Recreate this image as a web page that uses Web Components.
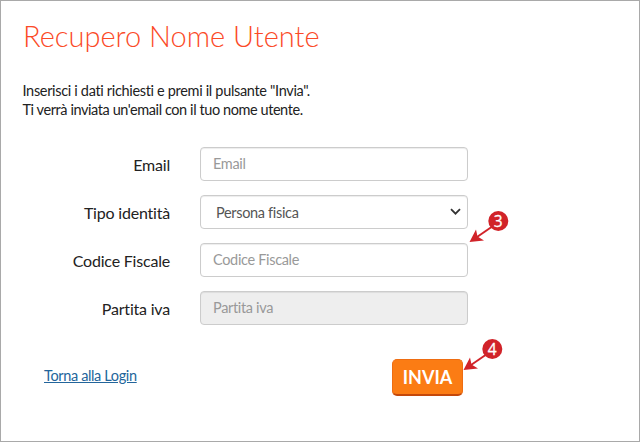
<!DOCTYPE html>
<html lang="it">
<head>
<meta charset="utf-8">
<title>Recupero Nome Utente</title>
<style>
    body {
        margin: 0;
        font-family: Lato, "Open Sans", sans-serif;
        color: #333;
    }

    intro-text span + span { letter-spacing: -.42px; }
</style>
</head>
<body>

<recovery-page>
    <page-title>Recupero Nome Utente</page-title>
    <intro-text>
        <span>Inserisci i dati richiesti e premi il pulsante "Invia".</span>
        <span>Ti verrà inviata un'email con il tuo nome utente.</span>
    </intro-text>
    <form-field label="Email" placeholder="Email"></form-field>
    <form-field label="Tipo identità" type="select">Persona fisica</form-field>
    <form-field label="Codice Fiscale" placeholder="Codice Fiscale">
        <step-marker slot="marker" step="3"></step-marker>
    </form-field>
    <form-field label="Partita iva" placeholder="Partita iva" disabled></form-field>
    <login-link slot="actions">Torna alla Login</login-link>
    <submit-button slot="actions">INVIA<step-marker slot="marker" step="4"></step-marker></submit-button>
</recovery-page>

<template id="recoveryPage">
    <style>
        :host {
            display: flex;
            flex-direction: column;
            box-sizing: border-box;
            width: 640px;
            height: 442px;
            padding: 16px 0 0 22px;
            border: 1px solid #a9a9a9;
            background: #fff;
            overflow: hidden;
        }

        .fields {
            display: flex;
            flex-direction: column;
        }

        .actions {
            display: flex;
            justify-content: space-between;
            align-items: flex-start;
            width: 419px;
            margin: 20px 0 0 21px;
        }
    </style>
    <div class="fields"><slot></slot></div>
    <div class="actions"><slot name="actions"></slot></div>
</template>

<template id="pageTitle">
    <style>
        :host { display: block; }

        h1 {
            margin: 0;
            width: max-content;
            font-size: 29px;
            font-weight: 300;
            line-height: 38px;
            color: #fb4a27;
        }
    </style>
    <h1><slot></slot></h1>
</template>

<template id="introText">
    <style>
        :host {
            display: flex;
            flex-direction: column;
            margin: 26px 0 28px -.5px;
            font-size: 14.5px;
            line-height: 19px;
            letter-spacing: -.33px;
            color: #222;
        }
    </style>
    <slot></slot>
</template>

<template id="formField">
    <style>
        :host {
            display: grid;
            grid-template-columns: 147px 268px;
            column-gap: 30px;
            align-items: center;
            height: 34px;
            margin-bottom: 14px;
        }

        label {
            padding-top: 1px;
            text-align: right;
            font-size: 16px;
            letter-spacing: -.2px;
            color: #222;
        }

        .box {
            display: flex;
            position: relative;
            box-sizing: border-box;
            height: 34px;
        }

        input, .select {
            box-sizing: border-box;
            width: 100%;
            height: 34px;
            padding: 0 12px 1px;
            border: 1px solid #ccc;
            border-radius: 4px;
            background: #fff;
            box-shadow: inset 0 1px 1px rgba(0, 0, 0, .075);
            font: 14.5px Lato, sans-serif;
            letter-spacing: -.33px;
            color: #555;
        }

        input::placeholder { color: #999; opacity: 1; }

        input:disabled { background: #eee; }

        .select {
            display: flex;
            align-items: center;
            justify-content: space-between;
            padding: 0 6px 0 15px;
        }
    </style>
    <label></label>
    <div class="box"></div>
</template>

<template id="loginLink">
    <style>
        :host { display: block; padding-top: 6px; }

        a {
            font-size: 14.5px;
            line-height: 19px;
            letter-spacing: -.36px;
            color: #23659b;
            text-decoration: underline;
        }
    </style>
    <a href="#"><slot></slot></a>
</template>

<template id="submitButton">
    <style>
        :host { display: block; position: relative; }

        button {
            display: block;
            box-sizing: border-box;
            width: 71px;
            height: 37px;
            padding: 0 0 1px;
            border: 1px solid #ee6d12;
            border-bottom: 2px solid #c4480a;
            border-radius: 5px;
            background: #fb7c14;
            font: bold 18px Lato, sans-serif;
            color: #fff;
        }
    </style>
    <button type="button"><slot></slot></button>
    <slot name="marker"></slot>
</template>

<template id="stepMarker">
    <style>
        /* il marcatore sta sopra il modulo, la punta tocca il controllo */
        :host {
            display: block;
            position: absolute;
            left: 100%;
            top: 0;
            width: 42px;
            height: 36px;
            pointer-events: none;
        }

        :host([step="3"]) { margin: -33px 0 0 1px; }
        :host([step="4"]) { margin: -21px 0 0 0; }

        svg { display: block; overflow: visible; }

        text {
            font: 15.5px "Open Sans", sans-serif;
            letter-spacing: 0;
            fill: #fff;
            stroke: #fff;
            stroke-width: .3;
            text-anchor: middle;
        }
    </style>
    <svg width="42" height="36" viewBox="0 0 42 36">
        <path d="M24 16 8 27" stroke="#d12329" stroke-width="2"/>
        <path d="M.5 32 7 19.5 8.5 26.5 15 30.5Z" fill="#d12329"/>
        <circle cx="29.3" cy="11" r="10" fill="#d12329"/>
        <text x="29.3" y="16.5"></text>
    </svg>
</template>

<script>
    (function recoveryComponents(customElements) {

        'use strict';

        class BaseComponent extends HTMLElement {

            constructor(templateId) {
                super();
                const template = document.querySelector(templateId);
                this.attachShadow({ mode: 'open' });
                this.shadowRoot.appendChild(document.importNode(template.content, true));
            }

        }

        class RecoveryPage extends BaseComponent {
            constructor() { super('#recoveryPage'); }
        }

        class PageTitle extends BaseComponent {
            constructor() { super('#pageTitle'); }
        }

        class IntroText extends BaseComponent {
            constructor() { super('#introText'); }
        }

        class LoginLink extends BaseComponent {
            constructor() { super('#loginLink'); }
        }

        class SubmitButton extends BaseComponent {
            constructor() { super('#submitButton'); }
        }

        class StepMarker extends BaseComponent {

            constructor() { super('#stepMarker'); }

            connectedCallback() {
                this.shadowRoot.querySelector('text').textContent = this.getAttribute('step');
            }

        }

        class FormField extends BaseComponent {

            constructor() { super('#formField'); }

            connectedCallback() {
                this.shadowRoot.querySelector('label').textContent = this.getAttribute('label');
                const box = this.shadowRoot.querySelector('.box');
                box.innerHTML = this.getAttribute('type') === 'select' ? this._getSelect() : this._getInput();
            }

            _getSelect() {
                return `<div class="select" role="combobox" tabindex="0">
                    <span><slot></slot></span>
                    <svg width="11" height="8" viewBox="0 0 11 8"><path d="M1 1.2 5.5 5.7 10 1.2" fill="none" stroke="#333" stroke-width="1.8"/></svg>
                </div>`;
            }

            _getInput() {
                const disabled = this.hasAttribute('disabled') ? 'disabled' : '';
                return `<input type="text" placeholder="${this.getAttribute('placeholder')}" ${disabled}>
                    <slot name="marker"></slot>`;
            }

        }

        customElements.define('recovery-page', RecoveryPage);
        customElements.define('page-title', PageTitle);
        customElements.define('intro-text', IntroText);
        customElements.define('form-field', FormField);
        customElements.define('login-link', LoginLink);
        customElements.define('submit-button', SubmitButton);
        customElements.define('step-marker', StepMarker);

    })(window.customElements);
</script>
</body>
</html>
